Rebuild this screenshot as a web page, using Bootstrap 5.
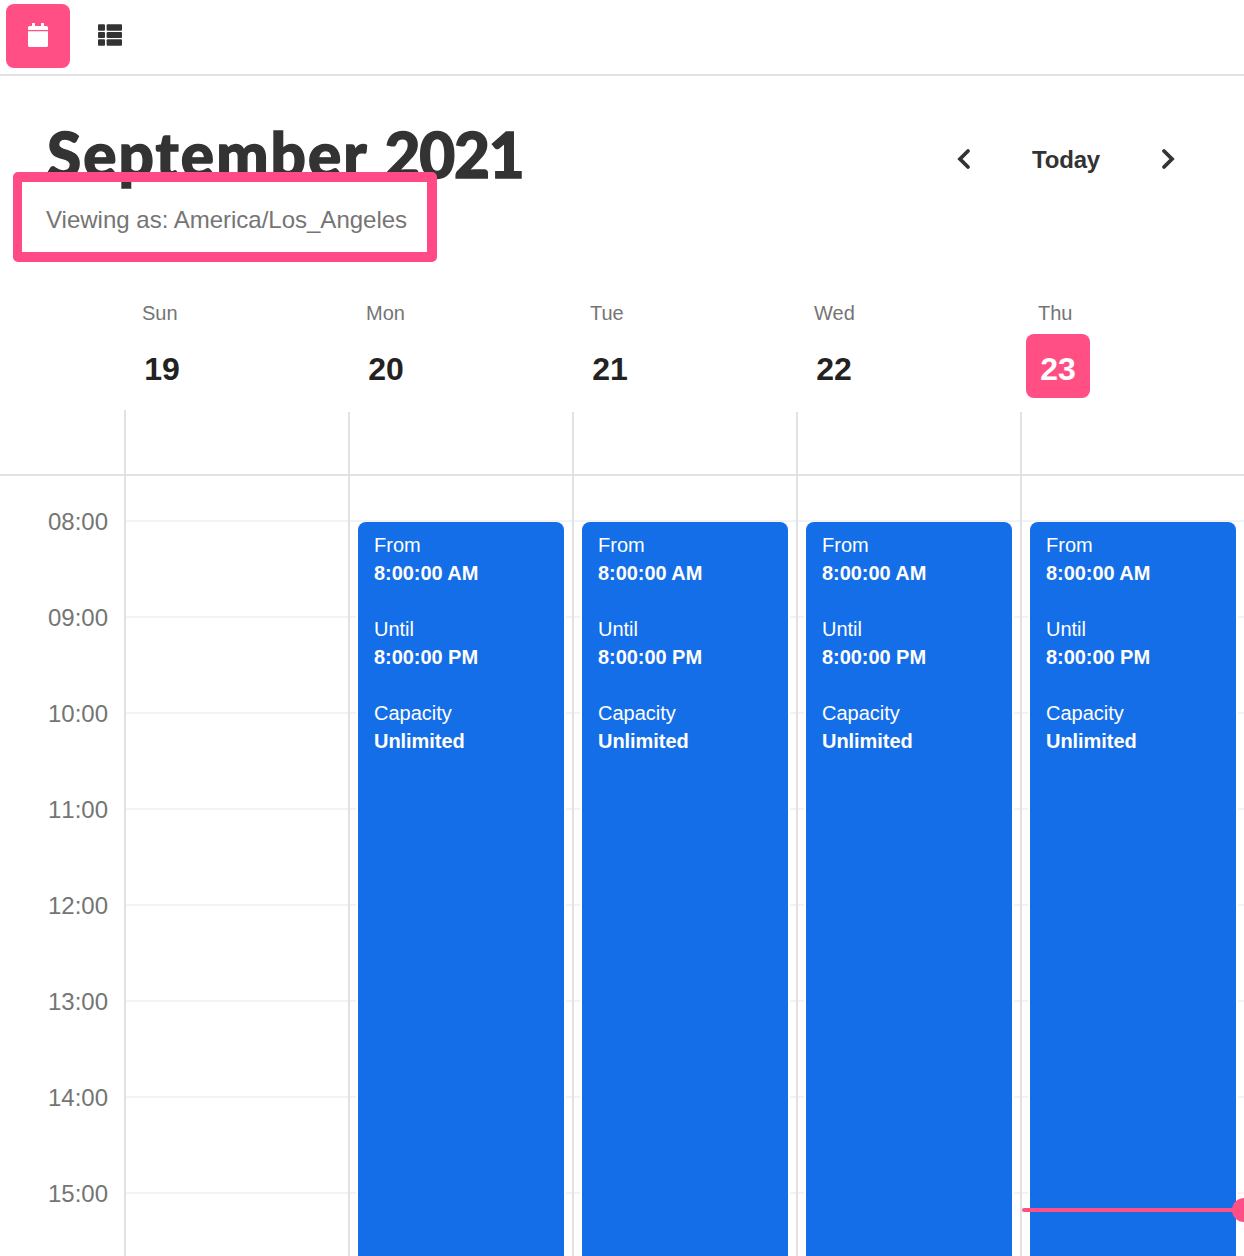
<!DOCTYPE html>
<html lang="en">
<head>
<meta charset="utf-8">
<meta name="viewport" content="width=device-width, initial-scale=1">
<title>Calendar</title>
<link href="https://cdn.jsdelivr.net/npm/bootstrap@5.3.0/dist/css/bootstrap.min.css" rel="stylesheet">
<style>
  :root { --pink: #ff4f84; --line: #e2e2e2; --ink: #333; --muted-ink: #757575; }
  body { font-family: "Liberation Sans", Arial, sans-serif; color: var(--ink); background: #fff; height: 1256px; overflow: hidden; }
  .topbar { height: 76px; border-bottom: 2px solid var(--line); padding: 4px 6px; gap: 8px; }
  .view-btn { width: 64px; height: 64px; border: 0; border-radius: 8px; padding: 0 0 2px; background: transparent; }
  .view-btn.active-view { background: var(--pink); }
  .cal-head { height: 214px; padding: 45px 68px 0 47px; }
  .cal-title { font-family: Lato, sans-serif; font-weight: 900; font-size: 62px; line-height: 67px; letter-spacing: 2.1px; -webkit-text-stroke: 1.4px var(--ink); margin: 0; white-space: nowrap; }
  .cal-title .yr { letter-spacing: -1.2px; }
  .tz-wrap { width: 424px; height: 90px; margin: -16px 0 0 -34px; border: 10px solid #ff4a86; border-left-width: 9px; border-radius: 5px; padding: 24px 0 0 24px; position: relative; }
  .tz { font-size: 24px; line-height: 28px; color: var(--muted-ink); white-space: nowrap; }
  .cal-nav { height: 48px; margin-top: 14px; }
  .cal-nav button { border: 0; background: transparent; padding: 0; color: var(--ink); }
  .cal-nav .today-btn { font-size: 24px; font-weight: 700; line-height: 48px; letter-spacing: -.2px; margin: 0 60px 0 60px; padding-top: 2px; }
  .gutter { width: 124px; flex: none; }
  .day { width: 224px; flex: none; }
  .day-names { height: 120px; }
  .day-names .day { padding: 10px 0 0 6px; }
  .dow { font-size: 20px; line-height: 26px; color: var(--muted-ink); padding-left: 12px; }
  .num { width: 64px; height: 64px; margin-top: 8px; border-radius: 8px; font-size: 32px; font-weight: 700; color: #222; padding-top: 6px; }
  .num.now { background: var(--pink); color: #fff; }
  .allday { height: 66px; border-bottom: 2px solid var(--line); }
  .allday .day { border-left: 2px solid var(--line); margin-top: 2px; }
  .allday .gutter + .day { margin-top: 0; }
  .hours { height: 780px; overflow: hidden; }
  .hours .gutter { padding: 32px 16px 0 0; }
  .hr { height: 96px; line-height: 28px; font-size: 24px; font-kerning: none; color: var(--muted-ink); text-align: right; }
  .hours .day { border-left: 2px solid var(--line); padding-top: 44px; position: relative; }
  .slot { height: 96px; border-top: 2px solid #f3f3f3; }
  .ev-wrap { position: absolute; top: 46px; left: 6px; right: 6px; height: 760px; background: #fff; padding: 0 2px; }
  .ev { height: 100%; background: #146ee8; color: #fff; border-radius: 8px 8px 0 0; padding: 9px 16px; font-size: 20px; line-height: 28px; white-space: nowrap; }
  .ev dl { margin: 0; }
  .ev dt { font-weight: 400; }
  .ev dd { font-weight: 700; margin: 0 0 28px; letter-spacing: -.05px; }
  .now-line { position: absolute; left: 0; right: 0; top: 732px; height: 4px; border-radius: 2px; background: var(--pink); }
  .now-line::after { content: ""; position: absolute; right: -12px; top: -10px; width: 24px; height: 24px; border-radius: 50%; background: var(--pink); }
</style>
<script src="https://cdn.jsdelivr.net/npm/bootstrap@5.3.0/dist/js/bootstrap.bundle.min.js"></script>
</head>
<body>
<nav class="topbar d-flex align-items-start">
  <button class="view-btn active-view d-flex align-items-center justify-content-center" aria-label="Calendar view">
    <svg width="24" height="28" viewBox="0 0 24 28" fill="#fff"><path d="M2 9V6.500Q2 5 3.500 5H6V2.600Q6 2 6.600 2H8.400Q9 2 9 2.600V5H15V2.600Q15 2 15.600 2H17.400Q18 2 18 2.600V5H20.500Q22 5 22 6.500V9ZM2 10.300H22V24.500Q22 26 20.500 26H3.500Q2 26 2 24.500Z"/></svg>
  </button>
  <button class="view-btn d-flex align-items-center justify-content-center" aria-label="List view">
    <svg width="24" height="24" viewBox="0 0 24 24" fill="#333"><rect y="1.300" width="7" height="6.400" rx="1"/><rect x="8.600" y="1.300" width="15.400" height="6.400" rx="1"/><rect y="8.900" width="7" height="6.200" rx="1"/><rect x="8.600" y="8.900" width="15.400" height="6.200" rx="1"/><rect y="16.300" width="7" height="6.400" rx="1"/><rect x="8.600" y="16.300" width="15.400" height="6.400" rx="1"/></svg>
  </button>
</nav>

<header class="cal-head d-flex justify-content-between align-items-start">
  <div>
    <h1 class="cal-title">September <span class="yr">2021</span></h1>
    <div class="tz-wrap"><div class="tz">Viewing as: America/Los_Angeles</div></div>
  </div>
  <div class="cal-nav d-flex align-items-center">
    <button class="d-flex" aria-label="Previous"><svg width="16" height="24" viewBox="0 0 16 24" fill="none" stroke="#333" stroke-width="3.800" stroke-linecap="round" stroke-linejoin="miter"><path d="M12 4L4 12L12 20"/></svg></button>
    <button class="today-btn">Today</button>
    <button class="d-flex" aria-label="Next"><svg width="16" height="24" viewBox="0 0 16 24" fill="none" stroke="#333" stroke-width="3.800" stroke-linecap="round" stroke-linejoin="miter"><path d="M4 4L12 12L4 20"/></svg></button>
  </div>
</header>

<main>
  <div class="day-names d-flex">
    <div class="gutter"></div>
    <div class="day"><div class="dow">Sun</div><div class="num d-flex align-items-center justify-content-center">19</div></div>
    <div class="day"><div class="dow">Mon</div><div class="num d-flex align-items-center justify-content-center">20</div></div>
    <div class="day"><div class="dow">Tue</div><div class="num d-flex align-items-center justify-content-center">21</div></div>
    <div class="day"><div class="dow">Wed</div><div class="num d-flex align-items-center justify-content-center">22</div></div>
    <div class="day"><div class="dow">Thu</div><div class="num now d-flex align-items-center justify-content-center">23</div></div>
  </div>
  <div class="allday d-flex">
    <div class="gutter"></div><div class="day"></div><div class="day"></div><div class="day"></div><div class="day"></div><div class="day"></div>
  </div>
  <div class="hours d-flex">
    <div class="gutter">
      <div class="hr">08:00</div><div class="hr">09:00</div><div class="hr">10:00</div><div class="hr">11:00</div>
      <div class="hr">12:00</div><div class="hr">13:00</div><div class="hr">14:00</div><div class="hr">15:00</div>
    </div>
    <div class="day">
      <div class="slot"></div><div class="slot"></div><div class="slot"></div><div class="slot"></div><div class="slot"></div><div class="slot"></div><div class="slot"></div><div class="slot"></div>
    </div>
    <div class="day">
      <div class="slot"></div><div class="slot"></div><div class="slot"></div><div class="slot"></div><div class="slot"></div><div class="slot"></div><div class="slot"></div><div class="slot"></div>
      <div class="ev-wrap"><div class="ev"><dl><dt>From</dt><dd>8:00:00 AM</dd><dt>Until</dt><dd>8:00:00 PM</dd><dt>Capacity</dt><dd>Unlimited</dd></dl></div></div>
    </div>
    <div class="day">
      <div class="slot"></div><div class="slot"></div><div class="slot"></div><div class="slot"></div><div class="slot"></div><div class="slot"></div><div class="slot"></div><div class="slot"></div>
      <div class="ev-wrap"><div class="ev"><dl><dt>From</dt><dd>8:00:00 AM</dd><dt>Until</dt><dd>8:00:00 PM</dd><dt>Capacity</dt><dd>Unlimited</dd></dl></div></div>
    </div>
    <div class="day">
      <div class="slot"></div><div class="slot"></div><div class="slot"></div><div class="slot"></div><div class="slot"></div><div class="slot"></div><div class="slot"></div><div class="slot"></div>
      <div class="ev-wrap"><div class="ev"><dl><dt>From</dt><dd>8:00:00 AM</dd><dt>Until</dt><dd>8:00:00 PM</dd><dt>Capacity</dt><dd>Unlimited</dd></dl></div></div>
    </div>
    <div class="day">
      <div class="slot"></div><div class="slot"></div><div class="slot"></div><div class="slot"></div><div class="slot"></div><div class="slot"></div><div class="slot"></div><div class="slot"></div>
      <div class="ev-wrap"><div class="ev"><dl><dt>From</dt><dd>8:00:00 AM</dd><dt>Until</dt><dd>8:00:00 PM</dd><dt>Capacity</dt><dd>Unlimited</dd></dl></div></div>
      <div class="now-line"></div>
    </div>
  </div>
</main>
</body>
</html>
